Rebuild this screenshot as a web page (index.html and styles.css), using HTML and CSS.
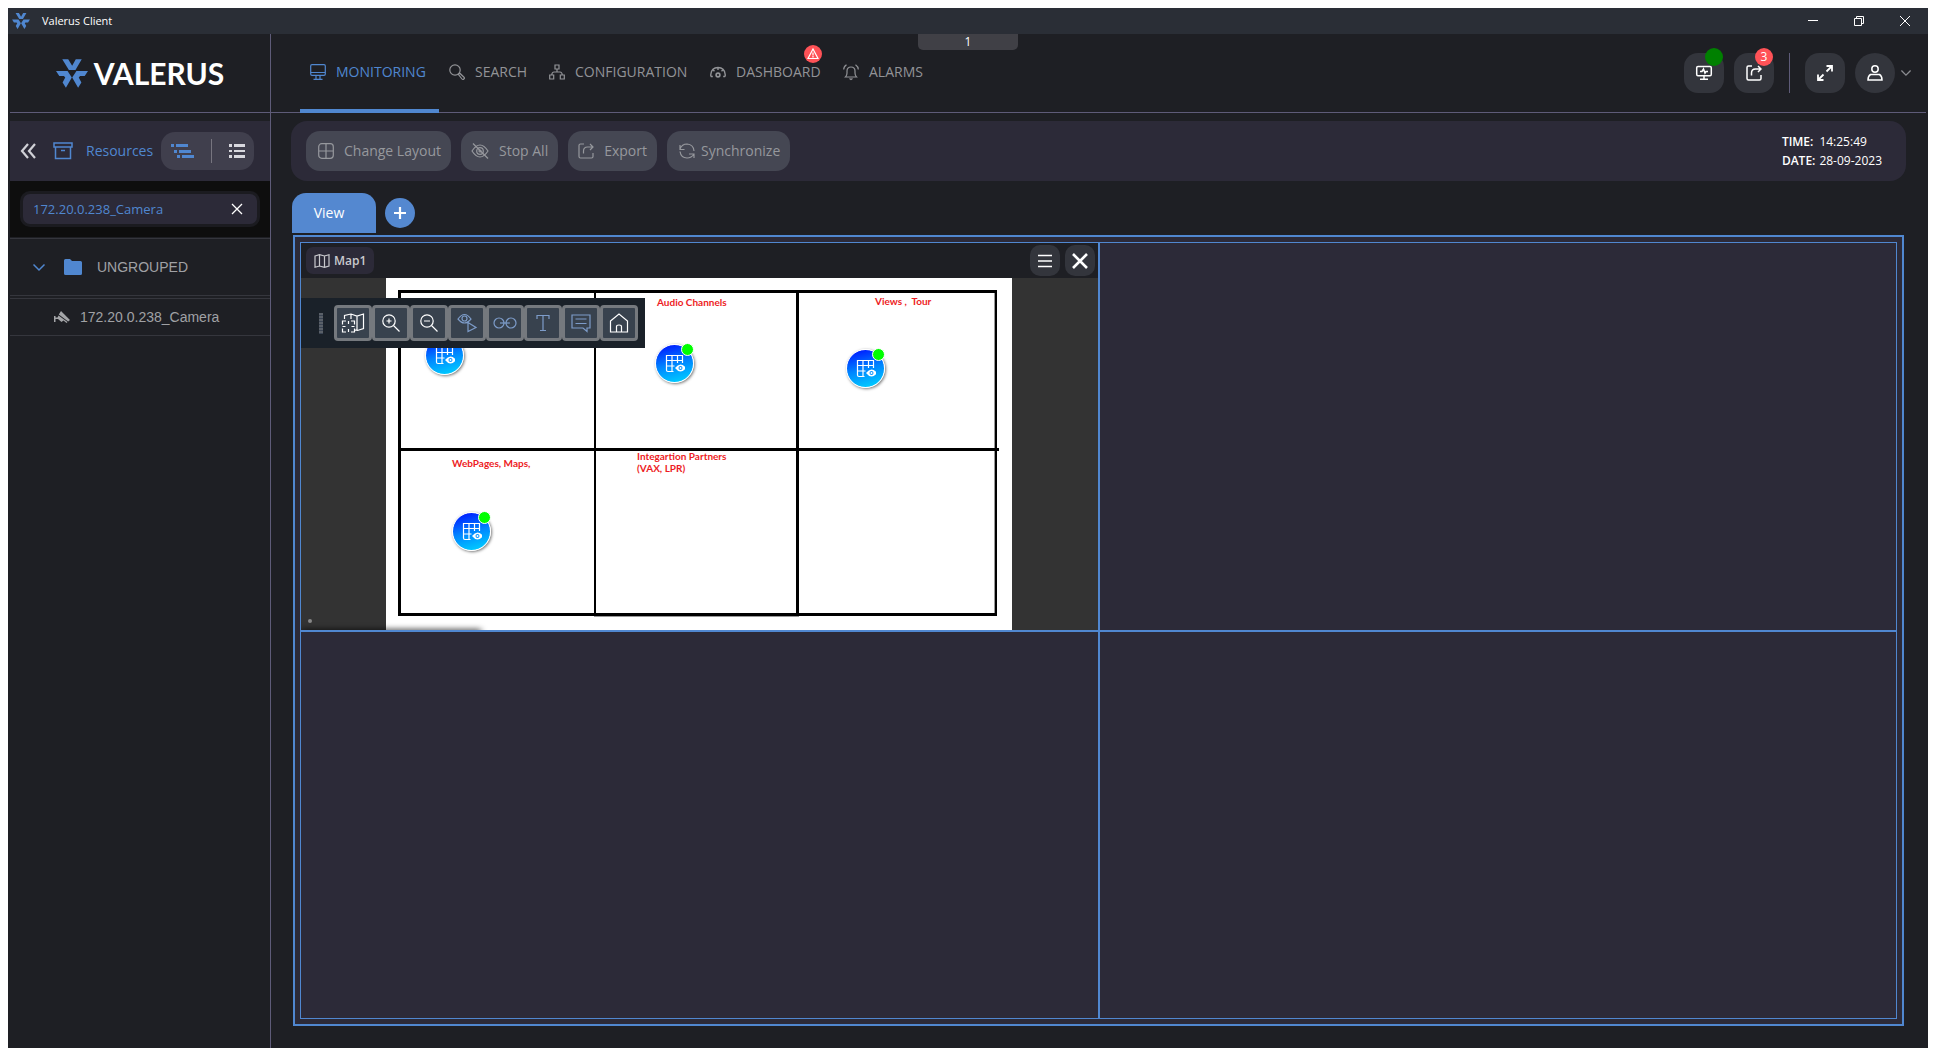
FILE: index.html
```html
<!DOCTYPE html>
<html lang="en">
<head>
<meta charset="utf-8">
<title>Valerus Client</title>
<meta name="viewport" content="width=device-width, initial-scale=1">
<link rel="stylesheet" href="styles.css">
</head>
<body>
<svg class="sprite" aria-hidden="true">
  <symbol id="star" viewBox="0 0 97 87">
    <path fill="#5087d0" d="M19 0h18l12 20L60 0h18L59 33H39zM0 36h35l13 20-18 31-10-16 8-15-4-5H10zM97 36H62L49 56l18 31 10-16-8-15 4-5h14z"/>
  </symbol>
  <symbol id="share" viewBox="0 0 16 16">
    <path d="M6 1H2.500Q1 1 1 2.500v11Q1 15 2.500 15h11q1.500 0 1.500-1.500V10M5.500 10.500V8q0-4 4-4H15M12 1l3 3-3 3"/>
  </symbol>
  <symbol id="pin" viewBox="0 0 20 20">
    <path fill="none" stroke="#fff" stroke-width="1.200" d="M8.500 17.500H3Q1.500 17.500 1.500 16V1.500h16V9M1.500 6.500h16M1.500 12h8M7 1.500v16M12.500 1.500V9"/>
    <path fill="#fff" d="M10 14q5.500-7 11 0-5.500 7-11 0z"/>
    <circle class="pupil" cx="15.500" cy="14" r="2"/><circle class="glint" cx="15.500" cy="14" r="1"/>
  </symbol>
</svg>

<div class="window">
  <header class="titlebar">
    <svg class="titlebar-logo"><use href="#star"/></svg>
    <span class="titlebar-name">Valerus Client</span>
    <div class="window-controls">
      <button type="button" aria-label="Minimize"><svg class="ico10" viewBox="0 0 10 10"><path d="M0 4.500h10"/></svg></button>
      <button type="button" aria-label="Restore"><svg class="ico10" viewBox="0 0 10 10"><path d="M.5 2.500h7v7h-7zM2.500 2.500v-2h7v7h-2"/></svg></button>
      <button type="button" aria-label="Close"><svg class="ico10" viewBox="0 0 10 10"><path d="M0 0l10 10M10 0L0 10"/></svg></button>
    </div>
  </header>

  <div class="app">
    <aside class="sidebar">
      <div class="brand">
        <svg class="brand-star"><use href="#star"/></svg>
        <span class="brand-name">VALERUS</span>
      </div>
      <div class="resources">
        <button type="button" class="collapse" aria-label="Collapse"><svg class="ico16" viewBox="0 0 16 16"><path stroke-width="2.200" d="M8 1L2 8l6 7M15 1L9 8l6 7"/></svg></button>
        <svg class="ico20" viewBox="0 0 20 20"><path stroke-width="1.500" d="M1 2h18v4H1zM2.500 6h15v11.500h-15zM8 9.500h4"/></svg>
        <h2 class="resources-title">Resources</h2>
        <div class="mode">
          <button type="button" aria-label="Tree view"><svg class="tree" viewBox="0 0 23 14"><path fill="#5087d0" d="M0 0h3v3H0zM5 0h12v3H5zM3 6h3v3H3zM8 6h12v3H8zM6 11h3v3H6zM11 11h12v3H11z"/></svg></button>
          <button type="button" aria-label="List view"><svg class="ico16" viewBox="0 0 16 16"><path fill="#d8d8de" stroke="none" d="M0 1h3v3H0zM5 1h11v3H5zM0 7h3v2H0zM5 7h11v2H5zM0 12h3v3H0zM5 12h11v3H5z"/></svg></button>
        </div>
      </div>
      <div class="search">
        <div class="search-box">
          <input type="text" aria-label="Search resources" value="172.20.0.238_Camera">
          <button type="button" aria-label="Clear"><svg class="ico10" viewBox="0 0 10 10"><path stroke-width="1.300" d="M0 0l10 10M10 0L0 10"/></svg></button>
        </div>
      </div>
      <ul class="tree-list">
        <li class="group">
          <svg class="chev" viewBox="0 0 12 7"><path stroke-width="1.500" d="M.5.5L6 6 11.500.5"/></svg>
          <svg class="folder" viewBox="0 0 18 16"><path fill="#5087d0" d="M0 1.500Q0 0 1.500 0H6l2 2h8.500Q18 2 18 3.500v11q0 1.500-1.500 1.500h-15Q0 16 0 14.500z"/></svg>
          <span>UNGROUPED</span>
        </li>
        <li class="camera">
          <svg class="ico16" viewBox="0 0 16 12"><path fill="#a4a5a8" stroke="none" d="M7 0l9 9-1.800 1.500L4.800 3.500zM4.500 4.500l9 6.500-1 1L9.500 9.500 7.500 11 4 8H1.500v3H0V5h1.500v1.500h2z"/></svg>
          <span>172.20.0.238_Camera</span>
        </li>
      </ul>
    </aside>

    <main class="main">
      <div class="topbar">
        <nav class="nav">
          <a href="#monitoring" class="active"><svg class="ico16" viewBox="0 0 16 16"><path d="M2 .7h12q1.300 0 1.300 1.300v8q0 1.300-1.300 1.300H2Q.7 11.300.7 10V2Q.7.700 2 .7zM1 8.500h14M6 11.500V15M10 11.500V15M3.500 15.300h9"/></svg>MONITORING</a>
          <a href="#search"><svg class="ico16" viewBox="0 0 16 16"><circle cx="6" cy="6" r="5.200"/><path d="M9.500 10.500l1.300-1.300 4.200 4q1 1-.2 1.800-1 1-1.800 0z"/></svg>SEARCH</a>
          <a href="#configuration"><svg class="ico16" viewBox="0 0 16 16"><path d="M6 1h4v4H6zM.7 11h4v4h-4zM11.300 11h4v4h-4zM8 5v3M2.700 11Q3 8 5 8h6q2 0 2.300 3"/></svg>CONFIGURATION</a>
          <a href="#dashboard"><svg class="ico16" viewBox="0 0 16 16"><path stroke-width="1.400" d="M.8 12.500V10.500Q1.500 3.500 8 3.500T15.200 10.500v2M.8 12.500h2M15.200 12.500h-2M8 3.500V6M3.200 6l1.300 1.300M12.800 6l-1.300 1.300"/><circle cx="8" cy="11" r="1.900" stroke-width="1.600"/></svg>DASHBOARD<span class="badge red alert"><svg class="ico12" viewBox="0 0 12 12"><path stroke-width="1.200" d="M6 1l5 9.500H1zM6 4.500v3M6 8v1.500"/></svg></span></a>
          <a href="#alarms"><svg class="ico16" viewBox="0 0 16 16"><path d="M2.500 13h11Q12 11.500 12 9V7q0-4-4-4T4 7v2q0 2.500-1.500 4zM6.500 14.500L8 15.500l1.500-1M3.500.7Q.7 2.500.7 5.500M12.500.7q2.800 1.800 2.800 4.800"/></svg>ALARMS</a>
        </nav>
        <div class="actions">
          <button type="button" class="round" aria-label="System status"><svg class="ico16" viewBox="0 0 16 16"><path d="M2 1.500h12q1.300 0 1.300 1.300v6.500q0 1.500-1.300 1.500H2Q.7 10.800.7 9.300V2.800Q.7 1.500 2 1.500zM4 6.500h2L7.500 4 9 8l1-1.500h2M8 11v3M4 14.300h8"/></svg><span class="badge green"></span></button>
          <button type="button" class="round" aria-label="Exports"><svg class="ico16"><use href="#share"/></svg><span class="badge red">3</span></button>
          <span class="rule"></span>
          <button type="button" class="round" aria-label="Full screen"><svg class="ico16" viewBox="0 0 16 16"><path stroke-width="1.800" d="M9.500 1H15v5.500M15 1L9.500 6.500M1 9.500V15h5.500M1 15l5.500-5.500"/></svg></button>
          <button type="button" class="round user" aria-label="Account"><svg class="ico16" viewBox="0 0 16 16"><circle cx="8" cy="4" r="3.200"/><path d="M3.500 9.500h9q2.500 1.500 2.500 5.500H1q0-4 2.500-5.500z"/></svg></button>
          <svg class="chev small" viewBox="0 0 12 7"><path stroke-width="1.500" d="M.5.5L6 6 11.500.5"/></svg>
        </div>
      </div>

      <div class="workspace">
        <div class="toolbar">
          <button type="button" class="tool"><svg class="ico16" viewBox="0 0 16 16"><rect x=".7" y=".7" width="14.600" height="14.600" rx="3"/><path d="M8 1v14M1 8h14"/></svg>Change Layout</button>
          <button type="button" class="tool"><svg class="ico18" viewBox="0 0 18 16"><path d="M1 8q8-12 16 0-8 12-16 0z"/><circle cx="9" cy="8" r="3.300"/><circle cx="9" cy="8" r="1"/><path d="M2 .500l15 15"/></svg>Stop All</button>
          <button type="button" class="tool"><svg class="ico16"><use href="#share"/></svg>Export</button>
          <button type="button" class="tool tight"><svg class="ico16" viewBox="0 0 16 16"><path d="M1 2v4.500h4.500M1 6q2-5 7-5 6.500.5 7 7M15 15v-4h-5M1 8.500Q2 15 8 15q4.500 0 7-4"/></svg>Synchronize</button>
          <dl class="clock">
            <dt>TIME:</dt><dd>14:25:49</dd>
            <dt>DATE:</dt><dd>28-09-2023</dd>
          </dl>
        </div>

        <div class="tabs">
          <button type="button" class="tab">View</button>
          <button type="button" class="add" aria-label="Add view"><svg class="ico12" viewBox="0 0 12 12"><path stroke-width="2.200" d="M6 0v12M0 6h12"/></svg></button>
        </div>

        <div class="frame">
          <div class="grid">
            <section class="cell">
              <div class="cell-head">
                <h3 class="chip"><svg class="ico16" viewBox="0 0 16 14"><path d="M1 2l4.500-1.300L10.500 2 15 .7V12l-4.500 1.300L5.500 12 1 13.300zM5.500.7V12M10.500 2v11.300"/></svg>Map1</h3>
                <div class="cell-buttons">
                  <button type="button" aria-label="Menu"><svg class="ico16" viewBox="0 0 16 16"><path stroke-width="1.400" d="M1 2.500h14M1 8h14M1 13.500h14"/></svg></button>
                  <button type="button" aria-label="Close map"><svg class="ico16" viewBox="0 0 16 16"><path stroke-width="2.600" d="M1 1l14 14M15 1L1 15"/></svg></button>
                </div>
              </div>
              <div class="map">
                <div class="canvas">
                  <svg class="plan" viewBox="0 0 626 352">
                    <path fill="#999" d="M208 338h205v1H208zM608 15h1v320h-1z"/>
                    <path d="M12 12h599v3H12zM12 170h601v3H12zM12 335h599v3H12zM12 12h3v326h-3zM208 12h2v326h-2zM410 12h3v326h-3zM609 12h2v326h-2z"/>
                    <text x="271" y="28">Audio Channels</text>
                    <text x="489" y="27">Views ,&#160; Tour</text>
                    <text x="66" y="189">WebPages, Maps,</text>
                    <text x="251" y="182">Integartion Partners</text>
                    <text x="251" y="194">(VAX, LPR)</text>
                  </svg>
                  <button type="button" class="pin p1" aria-label="Video channels"><svg class="ico20"><use href="#pin"/></svg></button>
                  <button type="button" class="pin p2" aria-label="Audio channels"><svg class="ico20"><use href="#pin"/></svg></button>
                  <button type="button" class="pin p3" aria-label="Views, tour"><svg class="ico20"><use href="#pin"/></svg></button>
                  <button type="button" class="pin p4" aria-label="Web pages, maps"><svg class="ico20"><use href="#pin"/></svg></button>
                </div>
                <div class="map-tools">
                  <span class="grip"></span>
                  <button type="button" aria-label="Fit map"><svg class="ico24" viewBox="0 0 24 20"><path d="M3.500 6V2.500L10 1l6 2 6.500-2v14.500l-6 2-2.500-.5M10 1v5M16 3v14M1.500 11.500V8H5M10 8h3.500v3.500M13.500 15.500V19H10M5 19H1.500v-3.500M7.500 8v3M7.500 16v3M1.500 13.500h3M10.500 13.500h3"/></svg></button>
                  <button type="button" aria-label="Zoom in"><svg class="ico18" viewBox="0 0 18 18"><circle cx="7" cy="7" r="6.200"/><path d="M11.500 11.500l6 6M4.500 7h5M7 4.500v5"/></svg></button>
                  <button type="button" aria-label="Zoom out"><svg class="ico18" viewBox="0 0 18 18"><circle cx="7" cy="7" r="6.200"/><path d="M11.500 11.500l6 6M4 7h6"/></svg></button>
                  <button type="button" class="dim" aria-label="Live view"><svg class="ico20" viewBox="0 0 20 20"><path d="M1 6q6.500-9 13 0-6.500 8-13 0zM11 9.500l8 5-8 4z"/><circle cx="7.500" cy="5.500" r="2.500"/></svg></button>
                  <button type="button" class="dim" aria-label="Link"><svg class="ico24" viewBox="0 0 24 12"><circle cx="6" cy="6" r="5"/><circle cx="18" cy="6" r="5"/><path d="M7 6h10"/></svg></button>
                  <button type="button" class="dim" aria-label="Text"><svg class="ico18" viewBox="0 0 18 18"><path d="M3 5V1.500h12V5M9 1.500v15M6 16.500h6M3 1.500V5"/></svg></button>
                  <button type="button" class="dim" aria-label="Comment"><svg class="ico20" viewBox="0 0 20 18"><path d="M1 1h18v13h-3v3.500L12 14H1zM4.500 5h11M4.500 9.500h11"/></svg></button>
                  <button type="button" aria-label="Home"><svg class="ico20" viewBox="0 0 20 20"><path d="M1.500 8L10 1l8.500 7v11h-17zM7.500 19v-5.500q0-1.500 2.500-1.500t2.500 1.500V19"/></svg></button>
                </div>
                <span class="dot"></span>
                <span class="shade"></span>
              </div>
            </section>
            <section class="cell"></section>
            <section class="cell"></section>
            <section class="cell"></section>
          </div>
        </div>
      </div>
    </main>
    <span class="count">1</span>
  </div>
</div>
</body>
</html>
```
FILE: styles.css
```css
* { box-sizing: border-box; }

:root {
  --blue: #5087d0;
  --dark: #1e1f24;
  --panel: #2c2a38;
  --line: #5e5b78;
  --muted: #a0a1a5;
}

body {
  margin: 0;
  padding: 8px;
  height: 100vh;
  background: #fff;
  color: #fff;
  font: 14px/20px "Open Sans", "Noto Sans", sans-serif;
}

button {
  margin: 0;
  padding: 0;
  border: 0;
  background: none;
  color: inherit;
  font: inherit;
  display: flex;
  align-items: center;
  justify-content: center;
}

h2, h3, dl, dd, ul { margin: 0; padding: 0; font-weight: 400; }
a { color: inherit; text-decoration: none; }
svg { fill: none; stroke: currentColor; stroke-width: 1.200; flex: none; overflow: visible; }
path[fill]:not([stroke]) { stroke: none; }
.pupil { fill: #0a94ff; stroke: none; }
.glint { fill: #fff; stroke: none; }
.sprite { position: absolute; width: 0; height: 0; }

.ico10 { width: 10px; height: 10px; }
.ico12 { width: 12px; height: 12px; }
.ico16 { width: 16px; height: 16px; }
.ico18 { width: 18px; height: 18px; }
.ico20 { width: 20px; height: 20px; }
.ico24 { width: 24px; height: 20px; }

/* Window frame */
.window { height: 100%; display: flex; flex-direction: column; background: var(--dark); }
.titlebar {
  height: 26px;
  flex: none;
  display: flex;
  align-items: center;
  gap: 12px;
  padding-left: 4px;
  background: #2a2e36;
  font-size: 11px;
}
.titlebar-logo { width: 18px; height: 16px; }
.window-controls { margin-left: auto; display: flex; }
.window-controls button { width: 46px; height: 26px; }
.window-controls svg { stroke-width: 1; }

.app { flex: 1; min-height: 0; display: flex; padding: 0 2px; position: relative; }
.count {
  position: absolute;
  top: 0;
  left: 50%;
  width: 100px;
  height: 16px;
  margin-left: -50px;
  border-radius: 0 0 5px 5px;
  background: #404046;
  font-size: 12px;
  line-height: 16px;
  text-align: center;
}

/* Sidebar */
.sidebar { width: 261px; flex: none; border-right: 1px solid var(--line); }
.brand {
  height: 79px;
  display: flex;
  align-items: center;
  justify-content: center;
  gap: 6px;
  border-bottom: 1px solid var(--line);
  margin-bottom: 8px;
}
.brand-star { width: 32px; height: 29px; }
.brand-name { font: 700 30px/32px Lato, sans-serif; }
.resources {
  height: 60px;
  display: flex;
  align-items: center;
  padding: 0 16px 0 10px;
  background: var(--panel);
  color: var(--blue);
}
.collapse { color: #d0d0d6; margin-right: 17px; }
.resources-title { font-size: 14px; margin-left: 13px; }
.mode {
  width: 93px;
  height: 38px;
  margin-left: auto;
  display: flex;
  align-items: center;
  border-radius: 14px;
  background: #403f4d;
}
.mode button { width: 50px; height: 24px; padding-right: 8px; }
.mode button + button { width: 43px; padding: 0 0 0 8px; border-left: 1px solid #77757f; }
.tree { width: 23px; height: 14px; }
.search { padding: 10px 10px; background: #0e0e0e; }
.search-box {
  height: 36px;
  display: flex;
  align-items: center;
  padding: 0 15px 0 10px;
  border: 3px solid #1b1b20;
  border-radius: 10px;
  background: var(--panel);
}
.search-box input {
  flex: 1;
  min-width: 0;
  padding: 0;
  border: 0;
  outline: 0;
  background: none;
  color: var(--blue);
  font: 13px/20px "Open Sans", sans-serif;
}
.tree-list {
  list-style: none;
  color: var(--muted);
  font: 14px/20px "Liberation Sans", Arial, sans-serif;
  margin-top: 1px;
}
.tree-list li { display: flex; align-items: center; border: 1px solid #35363d; border-width: 1px 0; }
.group { height: 58px; padding-left: 23px; }
.group span { margin-left: 15px; }
.camera { height: 38px; margin-top: 2px; padding-left: 44px; gap: 10px; }
.chev { width: 12px; height: 7px; color: var(--blue); }
.folder { width: 18px; height: 16px; margin-left: 19px; }

/* Header */
.main { flex: 1; min-width: 0; display: flex; flex-direction: column; }
.topbar {
  height: 79px;
  flex: none;
  display: flex;
  justify-content: space-between;
  align-items: center;
  padding: 0 15px 0 29px;
  border-bottom: 1px solid var(--line);
}
.nav { display: grid; grid-template-columns: 139px 100px 161px 133px auto; align-self: stretch; margin-bottom: -1px; color: #929397; }
.nav a { display: flex; align-items: center; gap: 10px; padding: 4px 0 4px 10px; border-bottom: 4px solid transparent; white-space: nowrap; position: relative; }
.nav .active { color: var(--blue); border-color: var(--blue); }
.badge {
  position: absolute;
  top: -5px;
  right: 1px;
  width: 18px;
  height: 18px;
  border-radius: 50%;
  font-size: 12px;
  line-height: 18px;
  text-align: center;
}
.red { background: #ff5257; color: #fff; }
.green { background: #008000; }
.alert { top: 11px; right: 11px; display: flex; align-items: center; justify-content: center; }
.actions { display: flex; align-items: center; gap: 10px; }
.round { width: 40px; height: 40px; border-radius: 14px; background: #33353c; position: relative; }
.user { border-radius: 50%; }
.actions .round > svg { stroke-width: 1.500; }
.rule { width: 1px; height: 40px; margin: 0 5px; background: var(--line); }
.chev.small { width: 10px; height: 6px; margin-left: -4px; color: #8c8d92; }

/* Workspace */
.workspace { flex: 1; min-height: 0; display: flex; flex-direction: column; padding: 8px 20px 22px; }
.toolbar {
  height: 60px;
  flex: none;
  display: flex;
  align-items: center;
  gap: 10px;
  padding: 0 24px 0 15px;
  border-radius: 16px;
  background: var(--panel);
}
.tool { height: 40px; padding: 0 10px; gap: 10px; border-radius: 14px; background: #454753; color: #96989d; white-space: nowrap; }
.tool:first-child { padding-left: 12px; }
.tool.tight { gap: 6px; padding-left: 12px; }
.clock {
  margin-left: auto;
  display: grid;
  grid-template-columns: auto auto;
  column-gap: 4px;
  font-size: 12px;
  line-height: 19px;
}
.clock dt { font-weight: 600; }
.tabs { display: flex; align-items: center; gap: 9px; height: 40px; margin: 12px 1px 2px; flex: none; }
.tab { width: 84px; height: 40px; padding-right: 10px; border-radius: 14px 14px 0 0; background: #5488d0; }
.add { width: 30px; height: 30px; border-radius: 50%; background: #5488d0; }
.frame { flex: 1; min-height: 0; display: flex; margin: 0 2px; padding: 5px; border: 2px solid var(--blue); background: var(--panel); }
.grid {
  flex: 1;
  display: grid;
  grid-template: 1fr 1fr / 1fr 1fr;
  gap: 2px;
  border: 1px solid var(--blue);
  background: var(--blue);
}
.cell { min-width: 0; min-height: 0; display: flex; flex-direction: column; background: var(--panel); }
.cell-head { height: 35px; flex: none; display: flex; align-items: center; justify-content: space-between; padding: 0 3px 0 5px; background: var(--dark); }
.chip { height: 27px; display: flex; align-items: center; gap: 4px; padding: 0 8px; border-radius: 7px; background: var(--panel); color: #c9c9cd; font-size: 12px; font-weight: 600; }
.cell-buttons { display: flex; gap: 5px; }
.cell-buttons button { width: 30px; height: 31px; border-radius: 10px; background: #33353c; }

/* Map */
.map { flex: 1; min-height: 0; position: relative; display: flex; justify-content: center; overflow: hidden; background: #333; }
.canvas { width: 626px; height: 352px; position: relative; background: #fff; }
.plan { display: block; width: 626px; height: 352px; fill: #000; stroke: none; }
.plan text { fill: #ed1c24; font: 700 10px Lato, sans-serif; }
.pin {
  position: absolute;
  width: 39px;
  height: 39px;
  border: 1px solid #fff;
  border-radius: 50%;
  background: linear-gradient(165deg, #0018ff 5%, #0084ff 50%, #00d0ff 95%);
  box-shadow: 1px 1px 3px #0008;
}
.pin::after { content: ""; position: absolute; top: -2px; right: -1px; width: 11px; height: 11px; border: 1px solid #fff; border-radius: 50%; background: #0f0; }
.pin svg { color: #fff; }
.p1 { left: 39px; top: 58px; }
.p2 { left: 269px; top: 66px; }
.p3 { left: 460px; top: 71px; }
.p4 { left: 66px; top: 234px; }
.map-tools { position: absolute; left: 0; top: 20px; height: 50px; display: flex; align-items: center; padding: 0 7px 0 18px; background: #1a2129; }
.grip { width: 4px; height: 21px; margin-right: 11px; background: repeating-linear-gradient(#5a6068 0 2px, #3a4453 2px 3px); }
.map-tools button { width: 38px; height: 36px; border: 3px solid #75797e; border-radius: 4px; background: #38424e; }
.map-tools .dim { color: #7d9cc9; }
.dot { position: absolute; left: 7px; bottom: 7px; width: 4px; height: 4px; border-radius: 50%; background: #888; }
.shade { position: absolute; left: 0; top: 100%; width: 180px; height: 4px; box-shadow: 0 0 6px #000; }
```
